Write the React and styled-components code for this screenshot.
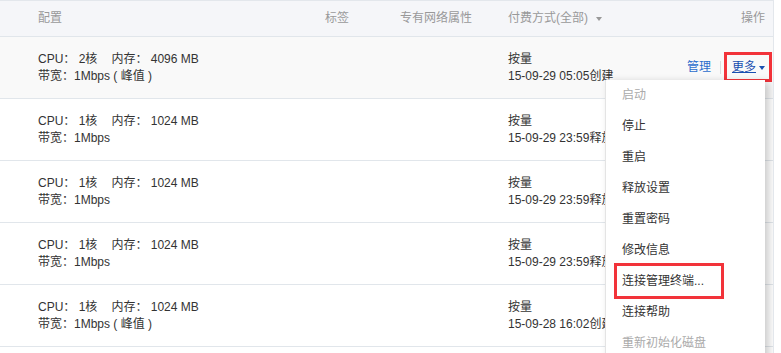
import React from 'react';
import styled, { createGlobalStyle } from 'styled-components';

const GlobalStyle = createGlobalStyle`
	body {
		margin: 0;
		background: #fff;
		font-family: 'Liberation Sans', 'Noto Sans CJK SC', sans-serif;
		font-size: 12px;
		color: #333;
	}
`;

const Table = styled.div`
	position: relative;
	width: 773px;
	height: 353px;
	overflow: hidden;
	border-right: 1px solid #e3e7ec;
`;

const Row = styled.div`
	display: grid;
	grid-template-columns: 287px 75px 108px 1fr;
	align-items: center;
	padding: 0 8px 0 38px;
	height: ${(p) => (p.$head ? '35px' : '61px')};
	background: ${(p) => (p.$head ? '#f5f6f9' : p.$hover ? '#f9f9f9' : '#fff')};
	border-top: ${(p) => (p.$head ? '1px solid #e3e7ec' : 'none')};
	border-bottom: 1px solid #e1e6eb;
	color: ${(p) => (p.$head ? '#999' : '#333')};
	line-height: 17px;
`;

const Ops = styled.div`
	display: flex;
	justify-content: ${(p) => (p.$split ? 'space-between' : 'flex-end')};
	align-items: center;
`;

const Caret = styled.span`
	display: inline-block;
	width: 0;
	height: 0;
	margin-left: ${(p) => p.$gap || 3}px;
	border-left: 3.5px solid transparent;
	border-right: 3.5px solid transparent;
	border-top: 4px solid ${(p) => p.$color || '#999'};
	vertical-align: middle;
`;

const Gap = styled.span`
	display: inline-block;
	width: ${(p) => p.$w}px;
`;

const Link = styled.a`
	color: #2b6dcc;
	text-decoration: none;
`;

const Sep = styled.span`
	display: inline-block;
	width: 1px;
	height: 13px;
	background: #ddd;
	margin: 0 11px 0 9px;
`;

const More = styled.span`
	position: relative;
	display: inline-flex;
	align-items: center;
	color: #1a4fb0;
	span:first-child {
		text-decoration: underline;
	}
`;

const RedBox = styled.div`
	position: absolute;
	border: 3px solid #f2333a;
	box-sizing: border-box;
	pointer-events: none;
`;

const Menu = styled.div`
	position: absolute;
	left: 605px;
	top: 80px;
	width: 159px;
	height: 290px;
	background: #fff;
	border-left: 1px solid #e4e4e4;
	box-shadow: 4px 2px 8px rgba(0, 0, 0, 0.2);
`;

const MenuItem = styled.div`
	position: relative;
	height: 31px;
	line-height: 30px;
	padding-left: 16px;
	font-size: 12px;
	color: ${(p) => (p.$disabled ? '#aaa' : '#333')};
`;

const rows = [
	{ cpu: 2, mem: 4096, peak: true, time: '15-09-29 05:05创建', hover: true },
	{ cpu: 1, mem: 1024, peak: false, time: '15-09-29 23:59释放' },
	{ cpu: 1, mem: 1024, peak: false, time: '15-09-29 23:59释放' },
	{ cpu: 1, mem: 1024, peak: false, time: '15-09-29 23:59释放' },
	{ cpu: 1, mem: 1024, peak: true, time: '15-09-28 16:02创建' },
];

const menu = [
	{ label: '启动', disabled: true },
	{ label: '停止' },
	{ label: '重启' },
	{ label: '释放设置' },
	{ label: '重置密码' },
	{ label: '修改信息' },
	{ label: '连接管理终端...', marked: true },
	{ label: '连接帮助' },
	{ label: '重新初始化磁盘', disabled: true },
];

const App = () => {
	return (
		<>
			<GlobalStyle />
			<Table>
				<Row $head>
					<div>配置</div>
					<div>标签</div>
					<div>专有网络属性</div>
					<Ops $split>
						<span>
							付费方式(全部)
							<Caret $gap={8} />
						</span>
						<span>操作</span>
					</Ops>
				</Row>
				{rows.map((r, i) => (
					<Row key={i} $hover={r.hover}>
						<div>
							<div>
								CPU： {r.cpu}核<Gap $w={14} />内存： {r.mem} MB
							</div>
							<div>带宽：1Mbps{r.peak ? ' ( 峰值 )' : ''}</div>
						</div>
						<div />
						<div />
						<Ops $split>
							<div>
								<div>按量</div>
								<div>{r.time}</div>
							</div>
							<Ops>
								<Link>管理</Link>
								<Sep />
								<More>
									<span>更多</span>
									<Caret $color="#1a4fb0" $gap={3} />
									{i === 0 && (
										<RedBox style={{ left: -8, top: -7, width: 48, height: 30 }} />
									)}
								</More>
							</Ops>
						</Ops>
					</Row>
				))}
				<Menu>
					{menu.map((m) => (
						<MenuItem key={m.label} $disabled={m.disabled}>
							{m.label}
							{m.marked && (
								<RedBox style={{ left: 8, top: -3, width: 110, height: 36 }} />
							)}
						</MenuItem>
					))}
				</Menu>
			</Table>
		</>
	);
};

export default App;
